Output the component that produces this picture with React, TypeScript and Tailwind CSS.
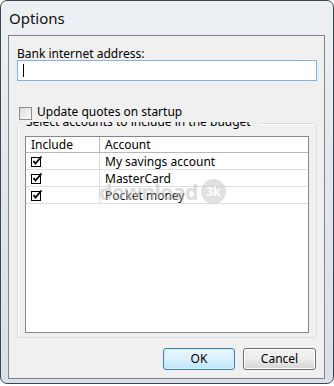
const accounts = ["My savings account", "MasterCard", "Pocket money"];

function CheckGlyph() {
  return (
    <svg width="12" height="12" viewBox="0 0 12 12" className="block">
      <rect x="0.5" y="2.5" width="9" height="9" fill="white" stroke="black" />
      <path d="M2.5 6 L4.5 8.5 L10.5 1.5" fill="none" stroke="black" strokeWidth="1.8" />
    </svg>
  );
}

function Watermark() {
  return (
    <div className="pointer-events-none absolute left-[99px] top-[179px] flex items-center gap-[3px] opacity-50">
      <span className="text-[21px] font-bold leading-[24px] tracking-[-0.5px] text-[#bdbdbd] [text-shadow:0_0_1px_white]">
        download
      </span>
      <span className="flex h-[25px] w-[25px] items-center justify-center rounded-full bg-[#c4c4c4] text-[12px] font-bold text-white">
        3k
      </span>
    </div>
  );
}

export default function App() {
  return (
    <div className="relative h-[386px] w-[334px] bg-white font-['Segoe_UI','Noto_Sans',sans-serif] text-[12px] text-black">
      <div className="flex h-[384px] flex-col rounded-[7px] border border-[#3e4650] bg-gradient-to-b from-[#eef1f4] via-[#e1e7ed] to-[#d9e0e8]">
        {/* title bar */}
        <div className="h-[34px] pl-[8px] pt-[8px] text-[15px] leading-[18px] text-[#111]">Options</div>

        {/* client area */}
        <div className="ml-[7px] mr-[8px] mb-[4px] flex h-[344px] flex-col border border-[#7d848c] bg-[#f0f0f0]">
          <div className="ml-[8px] mt-[12px] h-[12px] leading-[12px]">Bank internet address:</div>
          <div className="ml-[8px] flex h-[21px] w-[300px] items-center border border-[#7eb4ea] bg-white pl-[5px]">
            <div className="h-[13px] w-px bg-black" />
          </div>

          <div className="relative z-10 ml-[8px] mr-[8px] mt-[23px] flex h-[18px] items-start bg-[#f0f0f0]">
            <div className="ml-[2px] mt-[3px] h-[13px] w-[13px] border border-[#8f8f8f] bg-gradient-to-br from-[#dcdcdc] to-[#fbfbfb]" />
            <span className="ml-[5px] leading-[16px]">Update quotes on startup</span>
          </div>

          {/* group box */}
          <div className="relative ml-[8px] mt-[1px] h-[215px] w-[300px] rounded-[3px] border border-[#d5dfe5] pl-[7px] pt-[12px] shadow-[inset_1px_1px_0_white]">
            <div className="absolute left-[4px] top-[-8px] bg-[#f0f0f0] px-[4px] pr-[10px] leading-[12px]">
              Select accounts to include in the budget
            </div>
            <div className="relative h-[197px] w-[284px] border border-[#828790] bg-white">
              <div className="flex h-[16px] border-b border-[#b5b9bf] leading-[15px]">
                <div className="w-[74px] border-r border-[#b5b9bf] pl-[5px]">Include</div>
                <div className="pl-[5px]">Account</div>
              </div>
              {accounts.map((name) => (
                <div key={name} className="flex h-[17px] border-b border-[#dedede]">
                  <div className="w-[74px] border-r border-[#dedede] pl-[5px] pt-[2px]">
                    <CheckGlyph />
                  </div>
                  <div className="pl-[5px] leading-[17px]">{name}</div>
                </div>
              ))}
            </div>
          </div>

          {/* buttons */}
          <div className="mr-[8px] mt-[10px] flex justify-end gap-[8px]">
            <button className="h-[22px] w-[72px] rounded-[3px] border border-[#3c7fb1] bg-gradient-to-b from-[#eaf6fd] via-[#d9f0fc] to-[#bee6fd] leading-[18px] shadow-[inset_0_0_0_1px_#d6edfa]">
              OK
            </button>
            <button className="h-[22px] w-[73px] rounded-[3px] border border-[#707070] bg-gradient-to-b from-[#f2f2f2] via-[#ebebeb] to-[#d6d6d6] leading-[18px] shadow-[inset_0_0_0_1px_#fcfcfc]">
              Cancel
            </button>
          </div>
        </div>
      </div>
      <Watermark />
    </div>
  );
}
